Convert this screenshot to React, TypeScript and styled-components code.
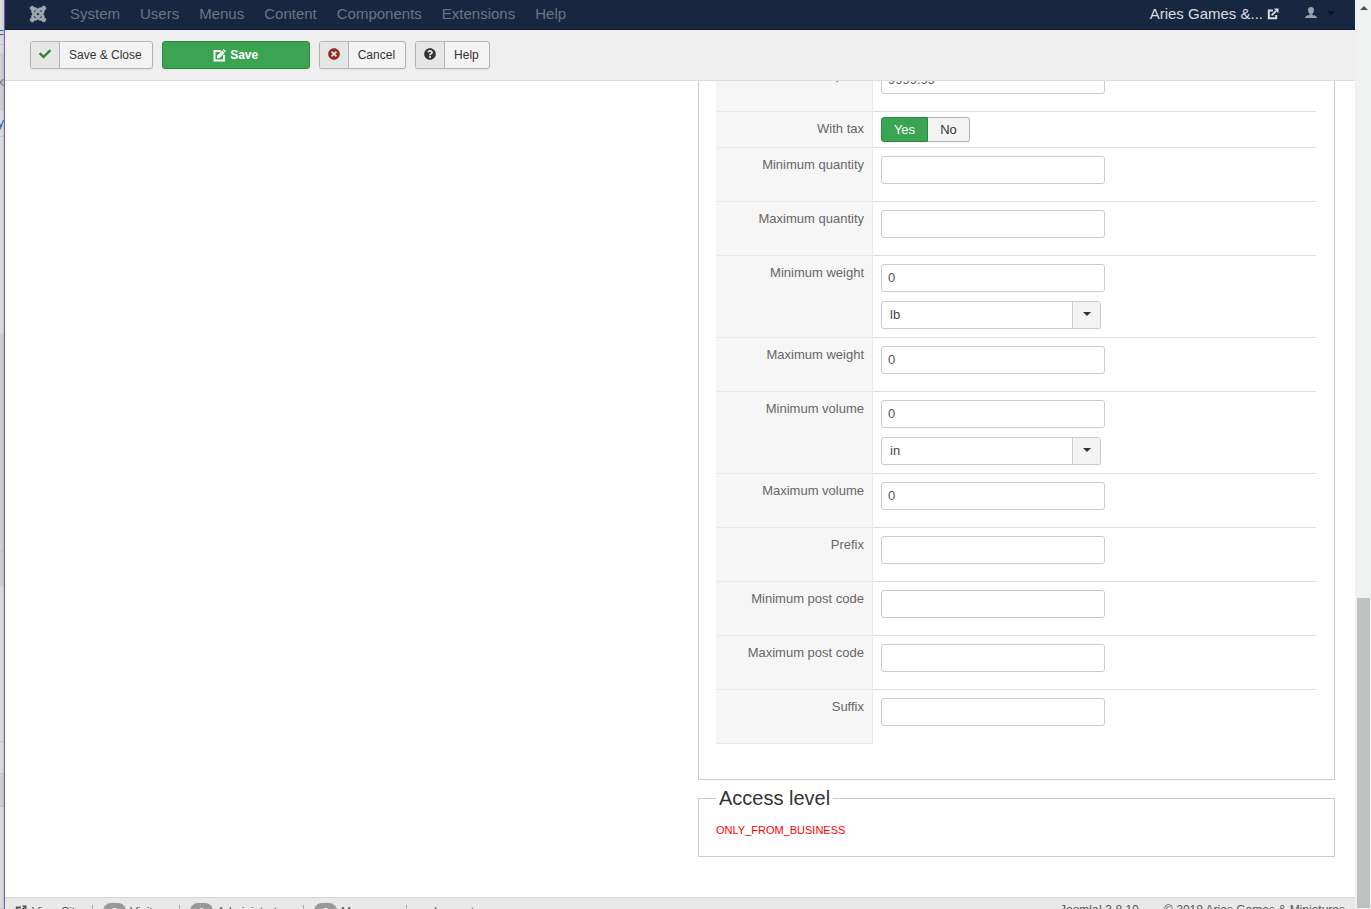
import React from "react";
import styled, { createGlobalStyle, css } from "styled-components";
import { FaCheck, FaJoomla, FaQuestionCircle, FaTimesCircle } from "react-icons/fa";

const GlobalStyle = createGlobalStyle`
  *, *::before, *::after { box-sizing: border-box; }
  html, body, #root { height: 100%; }
  body {
    margin: 0;
    overflow: hidden;
    background: #fff;
    color: #333;
    font-family: Arial, "Liberation Sans", sans-serif;
    font-size: 13px;
    line-height: 18px;
  }
  a { color: inherit; text-decoration: none; }
  input, select, button { font: inherit; color: inherit; margin: 0; }
`;

const Shell = styled.div`
  display: grid;
  grid-template-columns: 5px minmax(0, 1fr) 16px;
  grid-template-rows: minmax(0, 1fr);
  height: 100vh;
  overflow: hidden;
`;

const Behind = styled.div`
  display: flex;
  flex-direction: column;
  overflow: hidden;
  border-right: 1px solid #7d55a8;
  background: linear-gradient(to right, #dfe2e2, #c9cccc);
`;

const BehindBlock = styled.div<{ $size: number; $shade?: boolean; $color?: string; $low?: boolean }>`
  flex: ${(p) => p.$size} 0 0;
  display: flex;
  align-items: ${(p) => (p.$low ? "flex-end" : "center")};
  justify-content: flex-end;
  min-height: 0;
  overflow: hidden;
  border-bottom: 1px solid #c2c4c4;
  background: ${(p) => (p.$shade ? "rgba(0, 0, 0, 0.05)" : "transparent")};
  color: ${(p) => p.$color ?? "#777"};
`;

const Window = styled.div`
  display: grid;
  grid-template-rows: 30px 51px minmax(0, 1fr) 12px;
  min-width: 0;
`;

const NavBar = styled.nav`
  display: flex;
  align-items: center;
  padding: 0 20px 2px 24px;
  border-bottom: 1px solid #0f1c30;
  background: #16273f;
  color: #6a7585;
  font-size: 15px;
`;

const Brand = styled.a`
  display: flex;
  margin-right: 13px;
  color: #a0a7b0;
  svg {
    overflow: visible;
    stroke: currentColor;
    stroke-width: 24px;
  }
`;

const NavLink = styled.a`
  padding: 0 10px;
`;

const SiteLink = styled.a`
  display: flex;
  align-items: center;
  gap: 4px;
  margin-left: auto;
  color: #d9dce0;
`;

const UserButton = styled.button`
  display: flex;
  align-items: center;
  gap: 10px;
  margin-left: 26px;
  padding: 0 0 2px;
  border: 0;
  background: none;
  color: #969ea9;
`;

const Toolbar = styled.div`
  display: flex;
  align-items: flex-start;
  gap: 9px;
  padding: 11px 25px;
  border-bottom: 1px solid #dcdcdc;
  background: #efefef;
`;

const ToolButton = styled.button<{ $primary?: boolean }>`
  display: flex;
  align-items: center;
  justify-content: center;
  height: 28px;
  padding: 0;
  border: 1px solid #b3b3b3;
  border-radius: 3px;
  overflow: hidden;
  background: #f3f3f3;
  color: #333;
  font-size: 12px;
  box-shadow: 0 1px 2px rgba(0, 0, 0, 0.05);
  ${(p) =>
    p.$primary &&
    css`
      gap: 4px;
      width: 148px;
      border-color: #2d8643;
      background: #3aa453;
      color: #fff;
      font-weight: bold;
    `}
`;

const ToolIcon = styled.span<{ $color: string }>`
  display: flex;
  align-items: center;
  justify-content: center;
  align-self: stretch;
  width: 29px;
  padding-bottom: 2px;
  border-right: 1px solid #b3b3b3;
  background: #e6e6e6;
  color: ${(p) => p.$color};
`;

const ToolText = styled.span`
  padding: 0 10px 0 9px;
`;

const Content = styled.main`
  display: grid;
  grid-template-columns: minmax(0, 1fr) minmax(0, 1fr);
  grid-template-rows: minmax(0, 1fr);
  gap: 36px;
  padding: 0 20px 40px;
  overflow: hidden;
`;

/* Holds the right-hand column at the end of its scroll range. */
const Column = styled.div`
  grid-column: 2;
  display: flex;
  flex-direction: column;
  justify-content: flex-end;
  min-height: 0;
`;

const Panel = styled.fieldset`
  flex-shrink: 0;
  min-width: 0;
  margin: 0 0 7px;
  padding: 0 18px 35px 17px;
  border: 1px solid #ccc;
`;

const AccessPanel = styled(Panel)`
  margin: 0;
  padding: 12px 17px 17px;
`;

const Legend = styled.legend`
  padding: 0 3px;
  font-size: 20px;
  line-height: 22px;
`;

const Notice = styled.p`
  margin: 0;
  color: #f00;
  font-size: 11px;
`;

const Row = styled.div`
  display: grid;
  grid-template-columns: 157px minmax(0, 1fr);
`;

const Key = styled.div`
  padding: 8px;
  border: solid #e9e9e9;
  border-width: 0 1px 1px 0;
  background: #f6f6f6;
  color: #666;
  text-align: right;
`;

const Value = styled.div<{ $tight?: boolean; $last?: boolean }>`
  padding: ${(p) => (p.$tight ? "5px 8px" : "8px")};
  border-bottom: 1px solid ${(p) => (p.$last ? "transparent" : "#ddd")};
`;

const TextBox = styled.input`
  display: block;
  width: 224px;
  height: 28px;
  margin-bottom: 9px;
  padding: 3px 6px 5px;
  border: 1px solid #ccc;
  border-radius: 3px;
  background: #fff;
  color: #555;
`;

const SelectWrap = styled.div`
  position: relative;
  width: 220px;
  height: 28px;
`;

const Select = styled.select`
  display: block;
  width: 100%;
  height: 100%;
  padding: 0 36px 0 8px;
  border: 1px solid #ccc;
  border-radius: 3px;
  appearance: none;
  background: #fff;
  color: #444;
  box-shadow: 0 1px 2px rgba(0, 0, 0, 0.05);
`;

const SelectArrow = styled.span`
  position: absolute;
  top: 1px;
  right: 1px;
  bottom: 1px;
  display: flex;
  align-items: center;
  justify-content: center;
  width: 28px;
  padding-bottom: 2px;
  border-left: 1px solid #ccc;
  border-radius: 0 2px 2px 0;
  background: #f3f3f3;
  pointer-events: none;
`;

const Toggle = styled.div`
  display: flex;
`;

const ToggleOption = styled.label<{ $width: number }>`
  position: relative;
  display: flex;
  align-items: center;
  justify-content: center;
  width: ${(p) => p.$width}px;
  height: 25px;
  border: 1px solid #b3b3b3;
  border-left-width: 0;
  border-radius: 0 3px 3px 0;
  background: #f3f3f3;
  box-shadow: 0 1px 2px rgba(0, 0, 0, 0.05);
  &:first-child {
    border-left-width: 1px;
    border-radius: 3px 0 0 3px;
  }
  &:has(input:checked) {
    border-color: #2d8643;
    background: #3aa453;
    color: #fff;
  }
  input {
    position: absolute;
    opacity: 0;
    pointer-events: none;
  }
`;

const Footer = styled.footer`
  display: flex;
  align-items: flex-start;
  padding: 2px 10px 0;
  overflow: hidden;
  border-top: 1px solid #d5d5d5;
  background: #e9e9e9;
  color: #555;
  font-size: 12px;
  line-height: 20px;
`;

const FooterItem = styled.a<{ $width: number }>`
  display: flex;
  gap: 4px;
  width: ${(p) => p.$width}px;
  margin-top: 2px;
`;

const FooterRule = styled.span`
  width: 1px;
  height: 14px;
  margin: 5px 10px 0 0;
  background: #aaa;
`;

const Badge = styled.span`
  width: 23px;
  height: 16px;
  margin-top: 1px;
  border-radius: 8px;
  background: #999;
  color: #fff;
  font-weight: bold;
  text-align: center;
`;

const FooterIcon = styled.span`
  display: flex;
  width: 13px;
  padding-top: 3px;
`;

const Copyright = styled.span`
  margin-left: auto;
  white-space: pre;
`;

const ScrollTrack = styled.div`
  display: flex;
  flex-direction: column;
  align-items: center;
  padding: 0 1px 1px 2px;
  background: #f0f2f1;
`;

const ScrollTop = styled.div`
  flex: 598 0 0;
  line-height: 0;
  svg {
    margin-top: 6px;
  }
`;

const ScrollThumb = styled.div`
  flex: 310 0 0;
  align-self: stretch;
  background: #c0c2c1;
`;

const ExternalIcon = ({ size = 12 }: { size?: number }) => (
  <svg width={size} height={size} viewBox="0 0 12 12" fill="none" aria-hidden="true">
    <path d="M6 2.5H1.8v7.7h7.4V7" stroke="currentColor" strokeWidth="2" />
    <path d="M4.6 7.4 9 3" stroke="currentColor" strokeWidth="1.8" />
    <path d="M6.8.5h4.7v4.7z" fill="currentColor" />
  </svg>
);

const EditIcon = () => (
  <svg width="13" height="13" viewBox="0 0 13 13" fill="none" aria-hidden="true">
    <path d="M7.8 2H1.5v9.500H11V6" stroke="currentColor" strokeWidth="2" />
    <path d="M4 9.200V6.800L9.200 1.600l2.400 2.400L6.400 9.200z" fill="currentColor" />
    <path d="m9.800 1 1-1L13 2.200l-1 1z" fill="currentColor" />
  </svg>
);

const UserIcon = () => (
  <svg width="12" height="12" viewBox="0 0 12 12" fill="currentColor" aria-hidden="true">
    <path d="M6 0C4.100 0 3 1.200 3 3c0 1.700.7 3.200 1.700 4v1C2 8.400 0 9 0 11h12C12 9 10 8.400 7.300 8V7C8.300 6.200 9 4.700 9 3c0-1.800-1.100-3-3-3z" />
  </svg>
);

const Caret = ({ up = false, color = "#333" }: { up?: boolean; color?: string }) => (
  <svg width="8" height="4" viewBox="0 0 8 4" aria-hidden="true">
    <path d={up ? "M0 4h8L4 0z" : "M0 0h8L4 4z"} fill={color} />
  </svg>
);

type Field = { id: string; label: string; value?: string; units?: string[] };

const fields: Field[] = [
  { id: "min-quantity", label: "Minimum quantity" },
  { id: "max-quantity", label: "Maximum quantity" },
  { id: "min-weight", label: "Minimum weight", value: "0", units: ["lb", "oz", "kg", "g"] },
  { id: "max-weight", label: "Maximum weight", value: "0" },
  { id: "min-volume", label: "Minimum volume", value: "0", units: ["in", "ft", "cm", "m"] },
  { id: "max-volume", label: "Maximum volume", value: "0" },
  { id: "prefix", label: "Prefix" },
  { id: "min-post", label: "Minimum post code" },
  { id: "max-post", label: "Maximum post code" },
  { id: "suffix", label: "Suffix" },
];

const menu = ["System", "Users", "Menus", "Content", "Components", "Extensions", "Help"];

const FieldRow = ({ field, last }: { field: Field; last?: boolean }) => (
  <Row>
    <Key>
      <label htmlFor={field.id}>{field.label}</label>
    </Key>
    <Value $last={last}>
      <TextBox id={field.id} type="text" defaultValue={field.value ?? ""} />
      {field.units && (
        <SelectWrap>
          <Select aria-label={`${field.label} unit`} defaultValue={field.units[0]}>
            {field.units.map((u) => (
              <option key={u}>{u}</option>
            ))}
          </Select>
          <SelectArrow>
            <Caret />
          </SelectArrow>
        </SelectWrap>
      )}
    </Value>
  </Row>
);

export default function App() {
  return (
    <>
      <GlobalStyle />
      <Shell>
        <Behind aria-hidden="true">
          <BehindBlock $size={45} $low $color="#3a5fb0">F</BehindBlock>
          <BehindBlock $size={9} />
          <BehindBlock $size={54} $shade>x</BehindBlock>
          <BehindBlock $size={27} $color="#3a5fb0">y</BehindBlock>
          <BehindBlock $size={199} />
          <BehindBlock $size={219} $shade />
          <BehindBlock $size={33} $shade />
          <BehindBlock $size={157} />
          <BehindBlock $size={31} />
          <BehindBlock $size={33} $shade />
          <BehindBlock $size={102} />
        </Behind>
        <Window>
          <NavBar>
            <Brand href="#" aria-label="Joomla">
              <FaJoomla size={18} />
            </Brand>
            {menu.map((m) => (
              <NavLink href="#" key={m}>
                {m}
              </NavLink>
            ))}
            <SiteLink href="#">
              Aries Games &amp;...
              <ExternalIcon />
            </SiteLink>
            <UserButton type="button" aria-label="User menu">
              <UserIcon />
              <Caret color="#0b1422" />
            </UserButton>
          </NavBar>
          <Toolbar>
            <ToolButton type="button">
              <ToolIcon $color="#378137">
                <FaCheck size={12} />
              </ToolIcon>
              <ToolText>Save &amp; Close</ToolText>
            </ToolButton>
            <ToolButton type="button" $primary>
              <EditIcon />
              Save
            </ToolButton>
            <ToolButton type="button">
              <ToolIcon $color="#942a25">
                <FaTimesCircle size={12} />
              </ToolIcon>
              <ToolText>Cancel</ToolText>
            </ToolButton>
            <ToolButton type="button">
              <ToolIcon $color="#333">
                <FaQuestionCircle size={12} />
              </ToolIcon>
              <ToolText>Help</ToolText>
            </ToolButton>
          </Toolbar>
          <Content>
            <Column>
              <Panel>
                <FieldRow field={{ id: "max-price", label: "Maximum price", value: "9999.99" }} />
                <Row>
                  <Key>With tax</Key>
                  <Value $tight>
                    <Toggle role="radiogroup" aria-label="With tax">
                      <ToggleOption $width={47}>
                        <input type="radio" name="tax" defaultChecked />
                        Yes
                      </ToggleOption>
                      <ToggleOption $width={42}>
                        <input type="radio" name="tax" />
                        No
                      </ToggleOption>
                    </Toggle>
                  </Value>
                </Row>
                {fields.map((f, i) => (
                  <FieldRow key={f.id} field={f} last={i === fields.length - 1} />
                ))}
              </Panel>
              <AccessPanel>
                <Legend>Access level</Legend>
                <Notice>ONLY_FROM_BUSINESS</Notice>
              </AccessPanel>
            </Column>
          </Content>
          <Footer>
            <FooterItem href="#" $width={77}>
              <FooterIcon>
                <ExternalIcon />
              </FooterIcon>
              View Site
            </FooterItem>
            <FooterRule />
            <FooterItem href="#" $width={76}>
              <Badge>0</Badge>Visitors
            </FooterItem>
            <FooterRule />
            <FooterItem href="#" $width={113}>
              <Badge>1</Badge>Administrator
            </FooterItem>
            <FooterRule />
            <FooterItem href="#" $width={92}>
              <Badge>0</Badge>Messages
            </FooterItem>
            <FooterRule />
            <FooterItem href="#" $width={80}>
              <FooterIcon />
              Log out
            </FooterItem>
            <Copyright>{"Joomla! 3.8.10  —  © 2018 Aries Games & Miniatures"}</Copyright>
          </Footer>
        </Window>
        <ScrollTrack aria-hidden="true">
          <ScrollTop>
            <Caret up color="#505050" />
          </ScrollTop>
          <ScrollThumb />
        </ScrollTrack>
      </Shell>
    </>
  );
}
